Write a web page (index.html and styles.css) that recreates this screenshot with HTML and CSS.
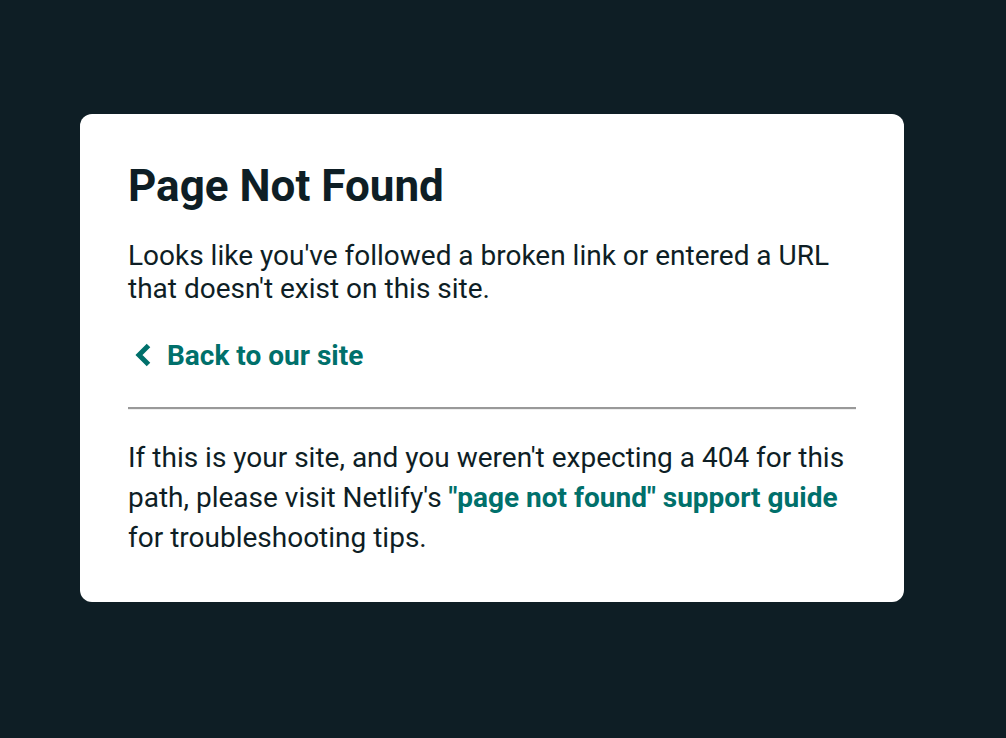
FILE: index.html
```html
<!DOCTYPE html>
<html lang="en">
<head>
<meta charset="utf-8">
<title>Page Not Found</title>
<link rel="stylesheet" href="styles.css">
</head>
<body>
<div class="card">
  <h1 class="title">Page Not Found</h1>
  <p class="lead">Looks like you've followed a broken link or entered a URL that doesn't exist on this site.</p>
  <a class="back" href="#"><svg class="chev" viewBox="0 0 18 24" width="18" height="24" aria-hidden="true"><path d="M15.5 2.5 L6 12 L15.5 21.5" fill="none" stroke="currentColor" stroke-width="5" stroke-linejoin="miter" stroke-miterlimit="10"/></svg><span>Back to our site</span></a>
  <hr class="rule">
  <p class="note">If this is your site, and you weren't expecting a 404 for this path, please visit Netlify's <a class="link" href="#">"page not found" support guide</a> for troubleshooting tips.</p>
</div>
</body>
</html>
```
FILE: styles.css
```css
html, body { margin: 0; padding: 0; }
body {
  background: #0e1e25;
  font-family: Roboto, "Liberation Sans", sans-serif;
  color: #0e1e25;
  padding: 114px 0 0 80px;
  min-height: 738px;
  box-sizing: border-box;
}
.card {
  width: 824px;
  box-sizing: border-box;
  background: #fff;
  border-radius: 12px;
  padding: 46px 48px 44px;
}
.title {
  margin: 0;
  font-size: 44px;
  font-weight: 700;
  line-height: 52px;
}
.lead {
  margin: 27px 0 0;
  font-size: 28px;
  line-height: 33px;
}
.back {
  display: flex;
  align-items: center;
  margin-top: 34px;
  color: #00706b;
  font-weight: 700;
  font-size: 28px;
  line-height: 34px;
  text-decoration: none;
}
.chev { margin: -2px 16px 0 5px; }
.rule {
  margin: 34px 0 0;
  border: 0;
  border-top: 2px solid #999;
  border-bottom: 1px solid #eee;
  height: 0;
}
.note {
  margin: 28px 0 0;
  font-size: 28px;
  line-height: 40px;
}
.link {
  color: #00706b;
  font-weight: 700;
  text-decoration: none;
}
```
